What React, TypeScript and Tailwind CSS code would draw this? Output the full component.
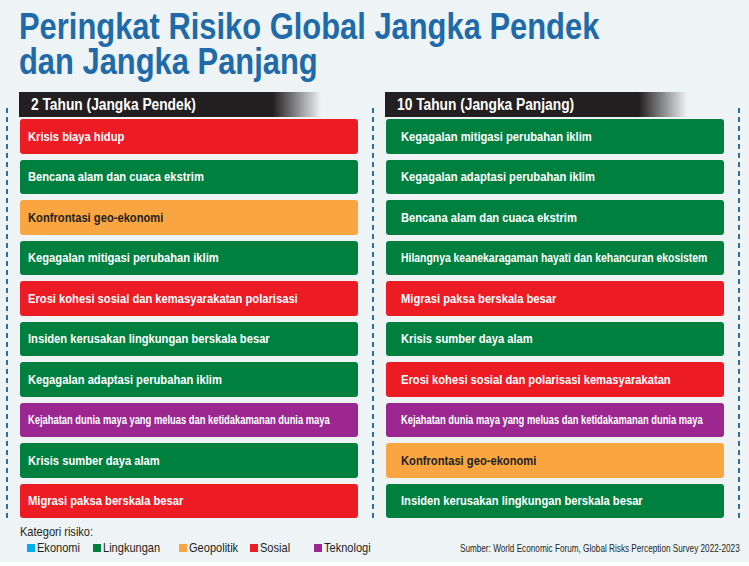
import { ReactNode } from "react";

type Risk = "red" | "green" | "orange" | "purple";

interface Row {
  label: string;
  kind: Risk;
  squeeze: string;
}

const fill: Record<Risk, string> = {
  red: "bg-[#ed1c24] text-white",
  green: "bg-[#00803f] text-white",
  orange: "bg-[#f9a541] text-[#231f20]",
  purple: "bg-[#9c2790] text-white",
};

const shortTerm: Row[] = [
  { label: "Krisis biaya hidup", kind: "red", squeeze: "scale-x-[0.86]" },
  { label: "Bencana alam dan cuaca ekstrim", kind: "green", squeeze: "scale-x-[0.86]" },
  { label: "Konfrontasi geo-ekonomi", kind: "orange", squeeze: "scale-x-[0.86]" },
  { label: "Kegagalan mitigasi perubahan iklim", kind: "green", squeeze: "scale-x-[0.86]" },
  { label: "Erosi kohesi sosial dan kemasyarakatan polarisasi", kind: "red", squeeze: "scale-x-[0.86]" },
  { label: "Insiden kerusakan lingkungan berskala besar", kind: "green", squeeze: "scale-x-[0.86]" },
  { label: "Kegagalan adaptasi perubahan iklim", kind: "green", squeeze: "scale-x-[0.86]" },
  { label: "Kejahatan dunia maya yang meluas dan ketidakamanan dunia maya", kind: "purple", squeeze: "scale-x-[0.72]" },
  { label: "Krisis sumber daya alam", kind: "green", squeeze: "scale-x-[0.86]" },
  { label: "Migrasi paksa berskala besar", kind: "red", squeeze: "scale-x-[0.86]" },
];

const longTerm: Row[] = [
  { label: "Kegagalan mitigasi perubahan iklim", kind: "green", squeeze: "scale-x-[0.86]" },
  { label: "Kegagalan adaptasi perubahan iklim", kind: "green", squeeze: "scale-x-[0.86]" },
  { label: "Bencana alam dan cuaca ekstrim", kind: "green", squeeze: "scale-x-[0.86]" },
  { label: "Hilangnya keanekaragaman hayati dan kehancuran ekosistem", kind: "green", squeeze: "scale-x-[0.80]" },
  { label: "Migrasi paksa berskala besar", kind: "red", squeeze: "scale-x-[0.86]" },
  { label: "Krisis sumber daya alam", kind: "green", squeeze: "scale-x-[0.86]" },
  { label: "Erosi kohesi sosial dan polarisasi kemasyarakatan", kind: "red", squeeze: "scale-x-[0.86]" },
  { label: "Kejahatan dunia maya yang meluas dan ketidakamanan dunia maya", kind: "purple", squeeze: "scale-x-[0.72]" },
  { label: "Konfrontasi geo-ekonomi", kind: "orange", squeeze: "scale-x-[0.86]" },
  { label: "Insiden kerusakan lingkungan berskala besar", kind: "green", squeeze: "scale-x-[0.86]" },
];

function Narrow({ children, className }: { children: ReactNode; className: string }) {
  return <span className={`inline-block whitespace-nowrap ${className}`}>{children}</span>;
}

function Dots() {
  return (
    <div className="mt-[16px] h-[412px] w-[2px] shrink-0 bg-[linear-gradient(to_bottom,#2f6ca6_0%,#2f6ca6_55%,transparent_55%)] bg-[length:2px_9px]" />
  );
}

function Column({ title, rows, pad }: { title: string; rows: Row[]; pad: string }) {
  return (
    <div className="flex w-[340px] shrink-0 flex-col">
      <div className="flex h-[25px] w-[302px] items-center pl-[12px] bg-[linear-gradient(to_right,#231f20_0%,#231f20_84%,rgba(35,31,32,0)_100%)]">
        <Narrow className="origin-left scale-x-[0.86] text-[16px] font-bold leading-none text-white">{title}</Narrow>
      </div>
      <div className="mt-[2px] ml-[1px] flex flex-col gap-[6px]">
        {rows.map((r, i) => (
          <div
            key={i}
            className={`flex h-[34.5px] w-[338px] items-center rounded-[3px] ${pad} ${fill[r.kind]}`}
          >
            <Narrow className={`origin-left text-[13px] font-bold leading-none ${r.squeeze}`}>{r.label}</Narrow>
          </div>
        ))}
      </div>
    </div>
  );
}

const legend = [
  { name: "Ekonomi", color: "bg-[#00aeef]", w: "w-[66px]" },
  { name: "Lingkungan", color: "bg-[#00803f]", w: "w-[86px]" },
  { name: "Geopolitik", color: "bg-[#f9a541]", w: "w-[71px]" },
  { name: "Sosial", color: "bg-[#ed1c24]", w: "w-[64px]" },
  { name: "Teknologi", color: "bg-[#9c2790]", w: "w-[60px]" },
];

export default function App() {
  return (
    <div className="h-[566px] w-[749px] overflow-hidden bg-white font-['Liberation_Sans',Arial,sans-serif]">
      <div className="h-[562px] bg-[#eef3f5]">
        <div className="pl-[19px] pt-[9px] text-[37px] font-bold text-[#1f6aa8]">
          <div className="h-[35px] leading-[35px]">
            <Narrow className="origin-left scale-x-[0.835] leading-[35px]">Peringkat Risiko Global Jangka Pendek</Narrow>
          </div>
          <div className="h-[35px] leading-[35px]">
            <Narrow className="origin-left scale-x-[0.835] leading-[35px]">dan Jangka Panjang</Narrow>
          </div>
        </div>

        <div className="mt-[13px] flex h-[428px] items-start pl-[6px]">
          <Dots />
          <div className="ml-[11px]">
            <Column title="2 Tahun (Jangka Pendek)" rows={shortTerm} pad="pl-[8px]" />
          </div>
          <div className="ml-[13px]">
            <Dots />
          </div>
          <div className="ml-[11px]">
            <Column title="10 Tahun (Jangka Panjang)" rows={longTerm} pad="pl-[15px]" />
          </div>
          <div className="ml-[13px]">
            <Dots />
          </div>
        </div>

        <div className="mt-[3px] pl-[20px] text-[#231f20]">
          <div className="h-[16px] leading-[16px]">
            <Narrow className="origin-left scale-x-[0.85] text-[13px] leading-[16px]">Kategori risiko:</Narrow>
          </div>
          <div className="mt-[1px] flex h-[16px] items-center">
            <div className="flex items-center pl-[7px]">
              {legend.map((l) => (
                <div key={l.name} className={`flex shrink-0 items-center ${l.w}`}>
                  <span className={`mr-[2px] h-[8px] w-[8px] shrink-0 ${l.color}`} />
                  <Narrow className="origin-left scale-x-[0.85] text-[13px] leading-[16px]">{l.name}</Narrow>
                </div>
              ))}
            </div>
            <div className="ml-auto mr-[9px] flex justify-end">
              <Narrow className="origin-right scale-x-[0.78] text-[10.5px] leading-[14px]">
                Sumber: World Economic Forum, Global Risks Perception Survey 2022-2023
              </Narrow>
            </div>
          </div>
        </div>
      </div>
    </div>
  );
}
